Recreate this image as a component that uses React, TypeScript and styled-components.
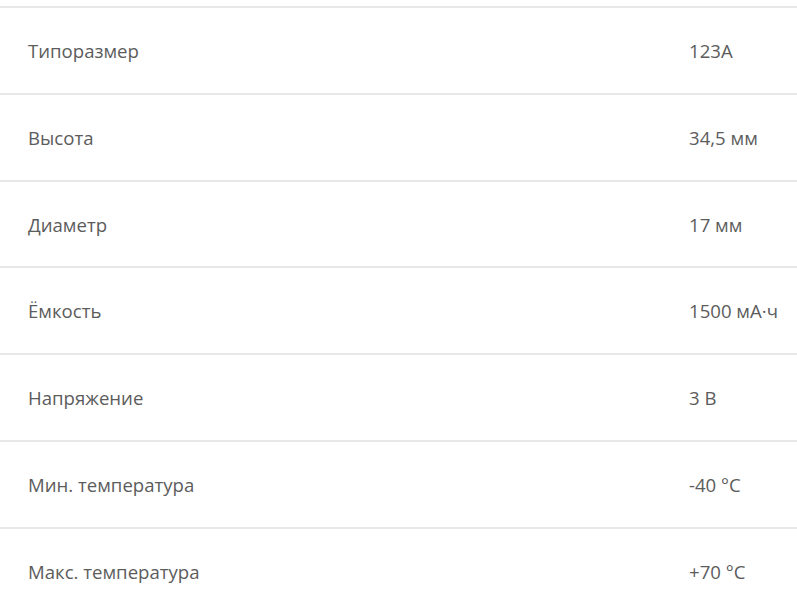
import React from 'react';
import styled, { createGlobalStyle } from 'styled-components';

const GlobalStyle = createGlobalStyle`
  html, body {
    margin: 0;
    padding: 0;
    background: #ffffff;
  }
`;

const SpecTable = styled.div`
  padding-top: 6px;
  font-family: "Open Sans", "Liberation Sans", sans-serif;
  font-size: 18.6px;
  color: #5c5c5c;
`;

const Row = styled.div`
  display: grid;
  grid-template-columns: 661px 1fr;
  align-items: center;
  height: 84.83px;
  padding-left: 28px;
  border-top: 2px solid #e8e8e8;
`;

const Label = styled.span`
  white-space: nowrap;
`;

const Value = styled.span`
  white-space: nowrap;
`;

const specs = [
    ['Типоразмер', '123A'],
    ['Высота', '34,5 мм'],
    ['Диаметр', '17 мм'],
    ['Ёмкость', '1500 мА·ч'],
    ['Напряжение', '3 В'],
    ['Мин. температура', '-40 °C'],
    ['Макс. температура', '+70 °C'],
];

export default () => {
    return (
        <>
            <GlobalStyle/>
            <SpecTable>
                {specs.map(([label, value]) => (
                    <Row key={label}>
                        <Label>{label}</Label>
                        <Value>{value}</Value>
                    </Row>
                ))}
            </SpecTable>
        </>
    );
};
